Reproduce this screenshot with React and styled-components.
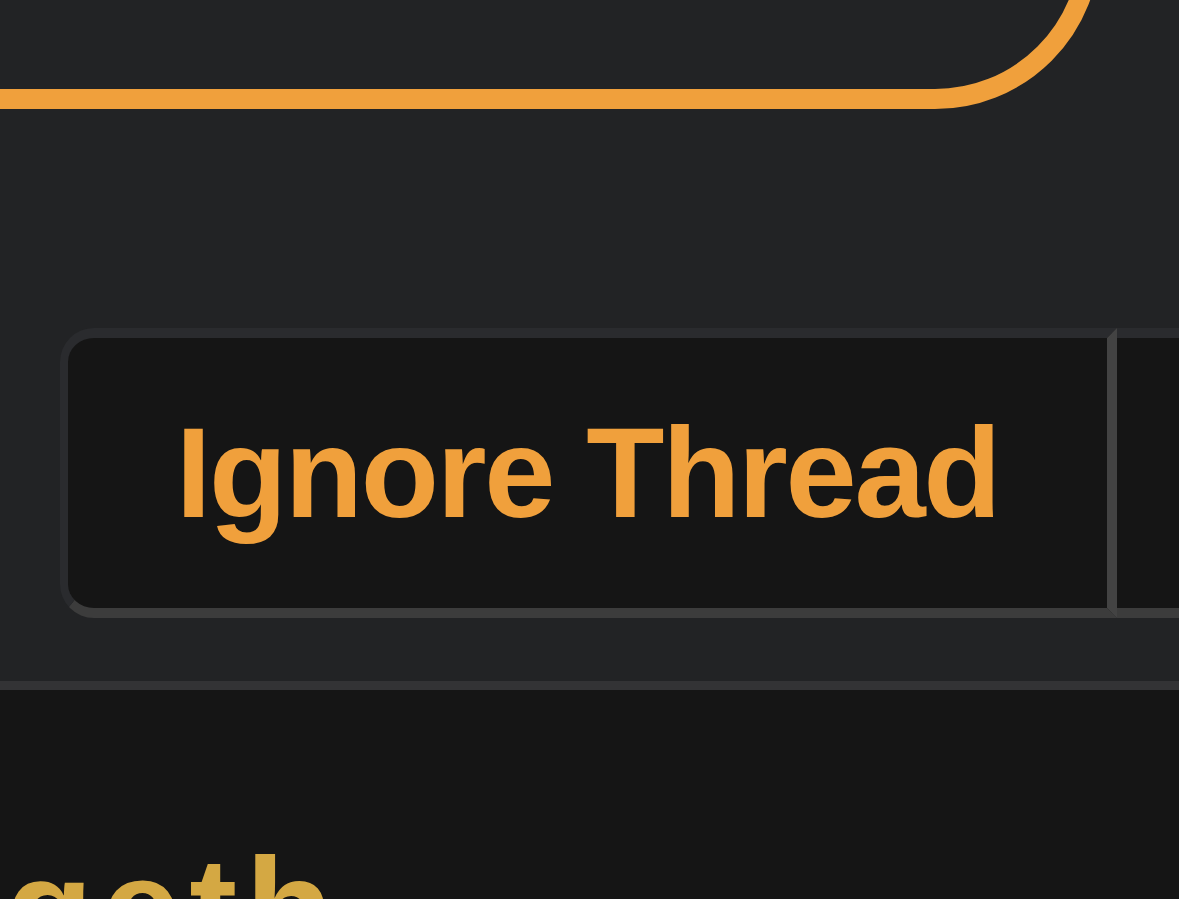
import React from "react"
import styled, { createGlobalStyle } from "styled-components"

const GlobalStyle = createGlobalStyle`
  html, body {
    margin: 0;
    padding: 0;
    background: #151515;
    overflow: hidden;
  }
  body {
    font-family: "Liberation Sans", Arial, Helvetica, sans-serif;
  }
`

const Page = styled.div`
  width: 1179px;
  height: 899px;
  overflow: hidden;
  display: flex;
  flex-direction: column;
`

const Header = styled.section`
  background: #222325;
  height: 690px;
  flex-shrink: 0;
  box-sizing: border-box;
  border-bottom: 9px solid #333335;
  display: flex;
  flex-direction: column;
`

const Card = styled.div`
  box-sizing: border-box;
  width: 1300px;
  height: 409px;
  margin: -300px 0 0 -200px;
  flex-shrink: 0;
  border: 20px solid #f0a03c;
  border-radius: 165px;
`

const Segmented = styled.div`
  display: flex;
  margin: 219px 0 0 60px;
  flex-shrink: 0;
`

const Segment = styled.button`
  flex-shrink: 0;
  box-sizing: border-box;
  width: ${(p) => p.$width}px;
  height: 290px;
  padding: 0;
  background: #151515;
  border-style: solid;
  border-width: 10px ${(p) => (p.$divider ? 10 : 0)}px 10px ${(p) => (p.$first ? 8 : 0)}px;
  border-color: #2a2b2e #434343 #3c3c3c #2a2b2e;
  border-radius: ${(p) => (p.$first ? "34px 0 0 34px" : "0")};
  color: #f0a03c;
  font-family: "Liberation Sans", Arial, Helvetica, sans-serif;
  font-weight: 700;
  font-size: 128px;
  letter-spacing: -2.3px;
  line-height: 1;
  display: flex;
  align-items: center;
  justify-content: center;
  cursor: pointer;
`

const Body = styled.section`
  flex: 1;
  background: #151515;
  overflow: hidden;
`

const Title = styled.h1`
  width: 545px;
  margin: 148px 0 0 -176px;
  word-break: break-all;
  color: #d4a843;
  font-family: "Liberation Sans", Arial, Helvetica, sans-serif;
  font-weight: 700;
  font-size: 144px;
  letter-spacing: 8px;
  line-height: 1;
`

export default function App() {
  return (
    <>
      <GlobalStyle />
      <Page>
        <Header>
          <Card />
          <Segmented>
            <Segment $first $divider $width={1057}>
              Ignore Thread
            </Segment>
            <Segment $width={400} />
          </Segmented>
        </Header>
        <Body>
          <Title>Together</Title>
        </Body>
      </Page>
    </>
  )
}
